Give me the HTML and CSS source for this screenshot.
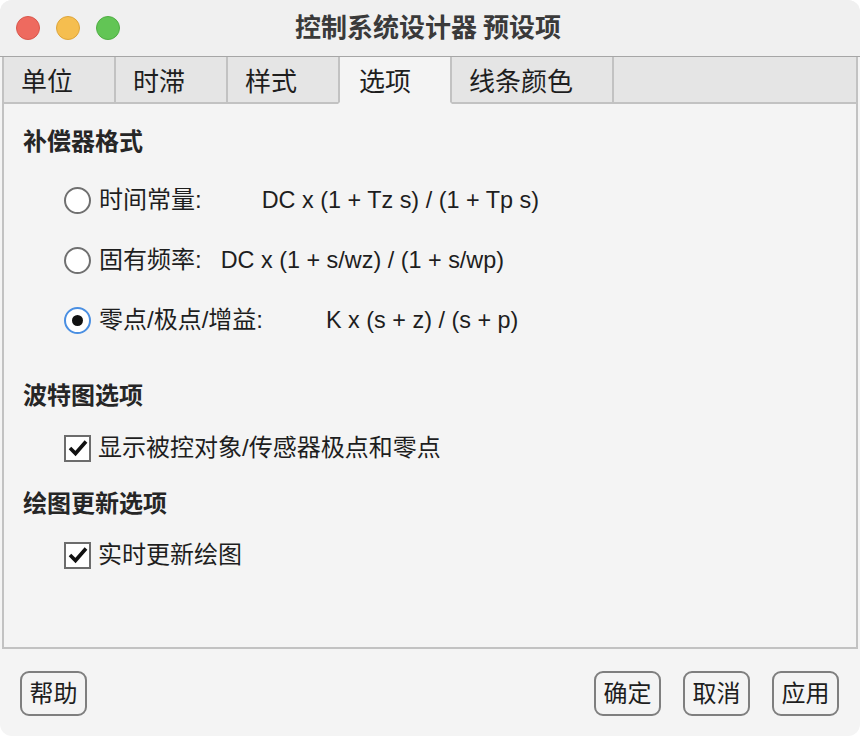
FILE: index.html
```html
<!DOCTYPE html>
<html lang="zh-CN">
<head>
<meta charset="utf-8">
<title>控制系统设计器 预设项</title>
<link rel="stylesheet" href="styles.css">
</head>
<body>
<div class="window">
  <div class="titlebar">
    <div class="lights">
      <span class="light red"></span>
      <span class="light yellow"></span>
      <span class="light green"></span>
    </div>
    <div class="title">控制系统设计器 预设项</div>
    <div></div>
  </div>
  <div class="body">
    <div class="tabs">
      <div class="tab">单位</div>
      <div class="tab">时滞</div>
      <div class="tab">样式</div>
      <div class="tab active">选项</div>
      <div class="tab wide">线条颜色</div>
      <div class="tab-fill"></div>
    </div>
    <div class="panel">
      <div class="heading h1">补偿器格式</div>
      <div class="radio-row r1">
        <span class="radio"></span>
        <span class="label">时间常量:</span>
        <span class="formula f1">DC x (1 + Tz s) / (1 + Tp s)</span>
      </div>
      <div class="radio-row r2">
        <span class="radio"></span>
        <span class="label">固有频率:</span>
        <span class="formula f2">DC x (1 + s/wz) / (1 + s/wp)</span>
      </div>
      <div class="radio-row r3">
        <span class="radio checked"><span class="dot"></span></span>
        <span class="label">零点/极点/增益:</span>
        <span class="formula f3">K x (s + z) / (s + p)</span>
      </div>
      <div class="heading h2">波特图选项</div>
      <div class="check-row c1">
        <span class="checkbox"><svg viewBox="0 0 22 22" width="22" height="22"><path d="M3 11 L8.5 16.5 L19 4.5" fill="none" stroke="#111" stroke-width="3.6" stroke-linecap="butt" stroke-linejoin="miter"/></svg></span>
        <span class="label">显示被控对象/传感器极点和零点</span>
      </div>
      <div class="heading h3">绘图更新选项</div>
      <div class="check-row c2">
        <span class="checkbox"><svg viewBox="0 0 22 22" width="22" height="22"><path d="M3 11 L8.5 16.5 L19 4.5" fill="none" stroke="#111" stroke-width="3.6" stroke-linecap="butt" stroke-linejoin="miter"/></svg></span>
        <span class="label">实时更新绘图</span>
      </div>
    </div>
    <div class="footer">
      <button class="btn">帮助</button>
      <div class="spacer"></div>
      <button class="btn">确定</button>
      <button class="btn">取消</button>
      <button class="btn">应用</button>
    </div>
  </div>
</div>
</body>
</html>
```

FILE: styles.css
```css
* { box-sizing: border-box; }
html, body { margin: 0; padding: 0; background: #ffffff; }
body {
  font-family: "Liberation Sans", "Noto Sans CJK SC", sans-serif;
  color: #1e1e1e;
}
.window {
  width: 860px;
  height: 736px;
  border-radius: 12px;
  overflow: hidden;
  background: #f4f4f4;
  display: flex;
  flex-direction: column;
}
.titlebar {
  height: 57px;
  flex: none;
  background: #f0f0f0;
  border-bottom: 1px solid #a6a6a6;
  display: grid;
  grid-template-columns: 1fr auto 1fr;
  align-items: center;
}
.lights {
  display: flex;
  gap: 16px;
  padding-left: 16px;
}
.light {
  width: 24px;
  height: 24px;
  border-radius: 50%;
  display: block;
}
.red { background: #ee6a5f; border: 1px solid #d9574c; }
.yellow { background: #f5be4f; border: 1px solid #dea53a; }
.green { background: #62c555; border: 1px solid #4fae43; }
.title {
  font-family: "Noto Sans CJK SC", sans-serif;
  font-weight: 700;
  font-size: 26px;
  line-height: 30px;
  color: #3a3a3a;
  padding: 0 4px 4px 0;
}
.body {
  flex: 1;
  display: flex;
  flex-direction: column;
  padding: 0 2px;
}
.tabs {
  display: flex;
  height: 47px;
  flex: none;
  border-left: 2px solid #c2c2c2;
}
.tab {
  width: 112px;
  height: 47px;
  background: #e5e5e5;
  border-right: 2px solid #c2c2c2;
  border-bottom: 2px solid #c2c2c2;
  font-family: "Noto Sans CJK SC", sans-serif;
  font-size: 26px;
  line-height: 45px;
  padding: 0 0 0 17px;
  color: #1e1e1e;
}
.tab.wide { width: 162px; }
.tab.active {
  background: #f4f4f4;
  border-bottom-color: #f4f4f4;
  border-left: 2px solid #c2c2c2;
  margin-left: -2px;
  width: 114px;
  padding-left: 19px;
}
.tab-fill {
  flex: 1;
  background: #e5e5e5;
  border-right: 2px solid #c2c2c2;
  border-bottom: 2px solid #c2c2c2;
}
.panel {
  flex: none;
  height: 545px;
  border-left: 2px solid #c2c2c2;
  border-right: 2px solid #c2c2c2;
  border-bottom: 2px solid #c2c2c2;
  padding: 21px 0 0 19px;
  display: flex;
  flex-direction: column;
}
.heading {
  font-family: "Noto Sans CJK SC", sans-serif;
  font-weight: 700;
  font-size: 24px;
  line-height: 30px;
  height: 30px;
  color: #262626;
}
.h2 { margin-top: 44px; }
.h3 { margin-top: 24px; }
.radio-row, .check-row {
  display: flex;
  align-items: center;
  height: 30px;
  margin-left: 41px;
  font-size: 24px;
  line-height: 30px;
}
.r1 { margin-top: 30px; }
.r2, .r3 { margin-top: 30px; }
.c1 { margin-top: 24px; }
.c2 { margin-top: 23px; }
.radio {
  width: 27px;
  height: 27px;
  border-radius: 50%;
  border: 2px solid #707070;
  background: #ffffff;
  display: flex;
  align-items: center;
  justify-content: center;
  margin-right: 8px;
  flex: none;
}
.radio.checked { border-color: #4a8fe2; }
.dot {
  width: 11px;
  height: 11px;
  border-radius: 50%;
  background: #111;
}
.label { color: #1e1e1e; white-space: pre; }
.formula { color: #1e1e1e; white-space: pre; font-size: 23.4px; }
.f1 { margin-left: 60px; }
.f2 { margin-left: 19px; }
.f3 { margin-left: 63px; }
.checkbox {
  width: 27px;
  height: 27px;
  border: 2px solid #6c6c6c;
  background: #ffffff;
  display: flex;
  align-items: center;
  justify-content: center;
  margin-right: 7px;
  flex: none;
}
.checkbox svg { display: block; }
.footer {
  flex: 1;
  display: flex;
  align-items: flex-start;
  padding: 22px 19px 0 18px;
  gap: 22px;
}
.spacer { flex: 1; }
.btn {
  width: 67px;
  height: 45px;
  border: 2px solid #7f7f7f;
  border-radius: 9px;
  background: #f4f4f4;
  font-family: "Noto Sans CJK SC", sans-serif;
  font-size: 24px;
  line-height: 30px;
  color: #1e1e1e;
  padding: 0 0 3px 0;
}
```
